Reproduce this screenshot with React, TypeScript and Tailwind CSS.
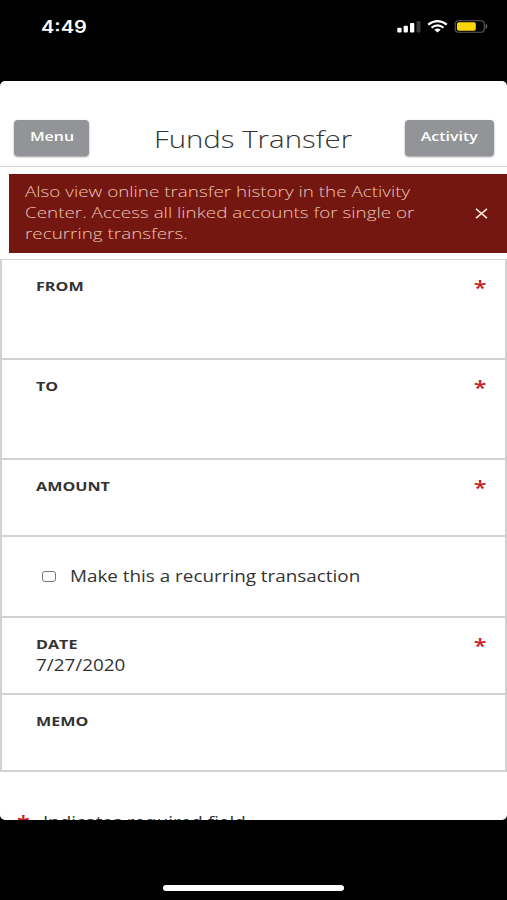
import { ReactNode } from "react";
import clsx from "clsx";

type FieldProps = {
  label: string;
  value?: string;
  required?: boolean;
  className?: string;
};

// wide text, anchored on its left edge
function Wide({ children, className }: { children: ReactNode; className?: string }) {
  return (
    <span
      className={clsx(
        "inline-block origin-left scale-x-[1.225] whitespace-nowrap",
        className
      )}
    >
      {children}
    </span>
  );
}

function StatusBar() {
  return (
    <div className="flex h-[81px] items-start justify-between pl-[41px] pr-[19px] pt-[17px] text-white">
      <span className="inline-block origin-left scale-x-[1.18] font-['Inter'] text-[17px] font-semibold leading-5">
        4:49
      </span>
      <svg width="91" height="20" viewBox="0 0 91 20" fill="none">
        <rect x="0.3" y="10.8" width="4.3" height="4.7" rx="1" fill="#fff" />
        <rect x="6.6" y="8.8" width="4.3" height="6.7" rx="1" fill="#fff" />
        <rect x="13" y="6" width="4.3" height="9.5" rx="1" fill="#fff" />
        <rect x="19.5" y="4" width="4" height="11.5" rx="1" fill="#3a3a3a" />
        <path d="M31.2 7.6Q40.5 0.6 49.8 7.6" stroke="#fff" strokeWidth="2.3" />
        <path d="M34.5 10.7Q40.5 6 46.5 10.7" stroke="#fff" strokeWidth="2.1" />
        <path d="M37.3 12.7Q40.5 10.3 43.7 12.7L40.5 15.5Z" fill="#fff" />
        <rect x="58.2" y="3.7" width="29" height="11.6" rx="3.2" stroke="#5c5c5c" strokeWidth="1.1" />
        <rect x="60" y="5.2" width="18.8" height="8.6" rx="1.8" fill="#fdd60a" />
        <path d="M89 7.3Q91 9.4 89 11.6Z" fill="#5c5c5c" stroke="#5c5c5c" />
      </svg>
    </div>
  );
}

function Field({ label, value, required, className }: FieldProps) {
  return (
    <div
      className={clsx(
        "flex justify-between border-b-2 border-[#d2d2d2] pl-[34px] pr-[19px] pt-4",
        className
      )}
    >
      <div className="flex flex-col items-start">
        <Wide className="text-[13.2px] font-bold leading-[21px]">{label}</Wide>
        {value && <Wide className="text-[15.4px] leading-[21px]">{value}</Wide>}
      </div>
      {required && (
        <span className="inline-block h-5 origin-right scale-x-[1.225] text-[19px] font-semibold leading-[25px] text-[#c9201f]">
          *
        </span>
      )}
    </div>
  );
}

function App() {
  return (
    <div className="flex h-[900px] w-[507px] flex-col overflow-hidden bg-black font-['Open_Sans',sans-serif] text-[#333]">
      <StatusBar />

      <main className="h-[739px] overflow-hidden rounded-[5px] bg-white">
        <header className="flex h-[86px] items-start border-b border-[#d2d2d2] pl-3.5 pr-[13px] pt-[39px]">
          <button className="h-9 w-[75px] rounded bg-[#929497] pb-1.5 text-white shadow-[0_1px_2px_rgba(0,0,0,0.4)]">
            <span className="inline-block scale-x-[1.225] text-[13px] font-semibold leading-5">Menu</span>
          </button>
          <h1 className="ml-3 mt-px flex-1 origin-center scale-x-[1.225] text-center text-2xl font-light leading-9">
            Funds Transfer
          </h1>
          <button className="h-9 w-[89px] rounded bg-[#929497] pb-1.5 text-white shadow-[0_1px_2px_rgba(0,0,0,0.4)]">
            <span className="inline-block scale-x-[1.225] text-[13px] font-semibold leading-5">Activity</span>
          </button>
        </header>

        <div className="ml-[9px] mt-[7px] flex h-[78.5px] items-center justify-between bg-[#741710] pl-4 pr-[19px] text-[#ecc4b6]">
          <p className="flex flex-col items-start pb-px text-[15.4px] font-light leading-[21px]">
            <Wide>Also view online transfer history in the Activity</Wide>
            <Wide>Center. Access all linked accounts for single or</Wide>
            <Wide>recurring transfers.</Wide>
          </p>
          <svg width="13" height="11" viewBox="0 0 13 11" stroke="#f8e4d8" strokeWidth="1.6">
            <path d="M1 0.8L12 10.2M12 0.8L1 10.2" />
          </svg>
        </div>

        <form className="mt-[6.5px] border-x-2 border-t border-[#d2d2d2]">
          <Field label="FROM" required className="h-[100px]" />
          <Field label="TO" required className="h-[100px]" />
          <Field label="AMOUNT" required className="h-[77px]" />
          <label className="flex h-[81px] items-center border-b-2 border-[#d2d2d2] pl-10">
            <input
              type="checkbox"
              className="mr-3.5 h-[11px] w-3.5 appearance-none rounded-[3px] border border-[#777] bg-white"
            />
            <Wide className="text-[15.4px] leading-5">Make this a recurring transaction</Wide>
          </label>
          <Field label="DATE" value="7/27/2020" required className="h-[77px]" />
          <Field label="MEMO" className="h-[77px] border-b" />
        </form>

        <p className="flex pl-[17px] pt-[41px] text-[15.4px] leading-5">
          <Wide className="w-[26px] text-[19px] font-semibold leading-[21px] text-[#c9201f]">*</Wide>
          <Wide>Indicates required field</Wide>
        </p>
      </main>

      <div className="flex flex-1 justify-center pt-[65px]">
        <div className="h-1.5 w-[181px] rounded-full bg-white" />
      </div>
    </div>
  );
}

export default App;
